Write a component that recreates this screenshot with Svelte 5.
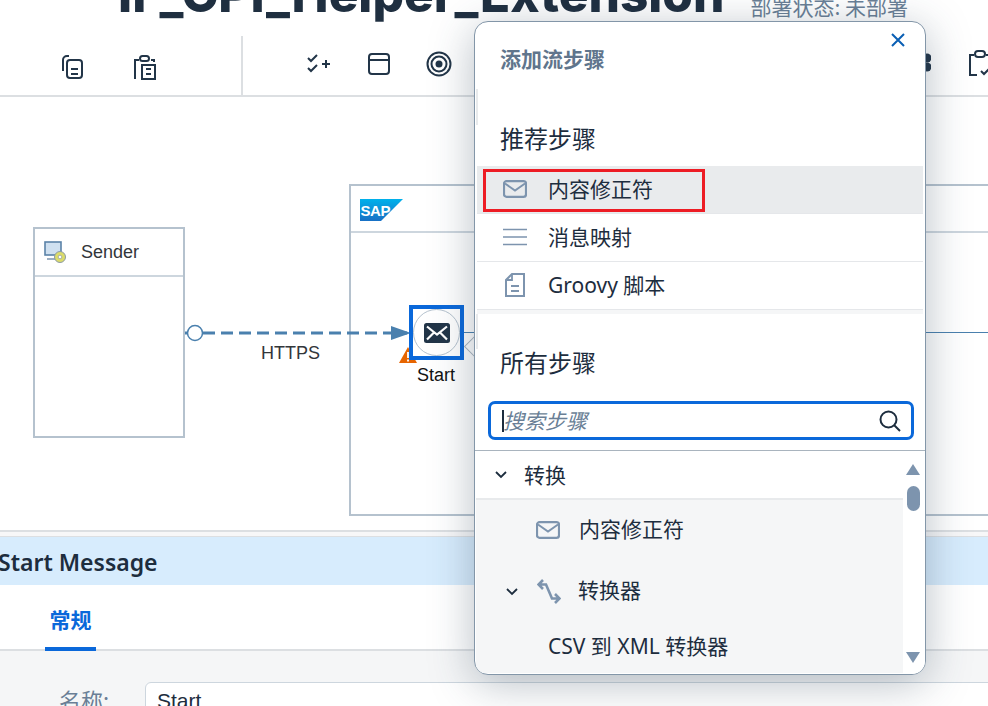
<script>
  const recommended = [
    { icon: 'mail', label: '内容修正符', active: true },
    { icon: 'lines', label: '消息映射' },
    { icon: 'doc', label: 'Groovy 脚本' }
  ];
</script>

{#snippet stepIcon(name)}
  {#if name === 'mail'}
    <svg class="step-icon" viewBox="0 0 24 18" width="24" height="18"><rect x="1" y="1.2" width="22" height="15.6" rx="2.5" fill="none" stroke="#7d94ae" stroke-width="2.2"/><path d="M2 3.5l10 7 10-7" fill="none" stroke="#7d94ae" stroke-width="2"/></svg>
  {:else if name === 'lines'}
    <svg class="step-icon" viewBox="0 0 24 18" width="24" height="18"><path d="M0 1.5h24M0 9h24M0 16.5h24" stroke="#7d94ae" stroke-width="1.6"/></svg>
  {:else}
    <svg class="step-icon" viewBox="0 0 24 24" width="24" height="24"><path d="M9 1h12v22H3V7z" fill="none" stroke="#7d94ae" stroke-width="2"/><path d="M9 1v6H3M8 13h8M8 18h8" fill="none" stroke="#7d94ae" stroke-width="1.8"/></svg>
  {/if}
{/snippet}

<div class="page">
  <header class="top">
    <div class="title-row">
      <h1>IF_CPI_Helper_Extension</h1>
      <span class="status">部署状态: 未部署</span>
    </div>
    <div class="toolbar">
      <div class="tool-group first">
        <svg viewBox="0 0 24 26" width="24" height="26" fill="none" stroke="#223548" stroke-width="2"><path d="M8 2H6a4 4 0 0 0-4 4v11"/><rect x="6" y="6" width="15" height="18" rx="3"/><path d="M10 15h7M10 20h7"/></svg>
        <svg viewBox="0 0 24 26" width="24" height="26" fill="none" stroke="#223548" stroke-width="2"><path d="M6 6H2v19M18 6h3v2"/><rect x="7" y="2" width="9" height="5" rx="2.5"/><rect x="9" y="11" width="13" height="14"/><path d="M13 15h5M13 20h5"/></svg>
      </div>
      <div class="tool-group second">
        <svg viewBox="0 0 26 20" width="26" height="20" fill="none" stroke="#223548" stroke-width="2"><path d="M2 4l3 3 6-6M2 14l3 3 6-6M16 10h8M20 6v8"/></svg>
        <svg viewBox="0 0 22 22" width="22" height="22" fill="none" stroke="#223548" stroke-width="2"><rect x="1" y="1" width="20" height="20" rx="3"/><path d="M1 7h20"/></svg>
        <svg viewBox="0 0 26 26" width="26" height="26" fill="none" stroke="#223548" stroke-width="2"><circle cx="13" cy="13" r="11.5"/><circle cx="13" cy="13" r="7.5"/><circle cx="13" cy="13" r="3.5" fill="#223548" stroke="none"/></svg>
      </div>
      <div class="tool-group third">
        <svg class="clip" viewBox="0 0 24 20" width="24" height="20"><circle cx="20" cy="5" r="4.5" fill="#223548"/><circle cx="20" cy="14" r="4.5" fill="#223548"/></svg>
        <svg class="clip" viewBox="0 0 24 26" width="24" height="26" fill="none" stroke="#223548" stroke-width="2"><path d="M6 5H2v20h7M18 5h4v10"/><rect x="7" y="1" width="10" height="6" rx="3"/><path d="M13 21l3 3 6-6"/></svg>
      </div>
    </div>
  </header>

  <main class="canvas">
    <div class="participant">
      <div class="participant-head">
        <svg viewBox="0 0 22 22" width="22" height="22"><rect x="1" y="1" width="16" height="13" fill="#cfe0f0" stroke="#5b83a8" stroke-width="1.6"/><path d="M3 18h12" stroke="#7d94ae" stroke-width="1.5"/><circle cx="16" cy="16" r="5.5" fill="#dcdc6a" stroke="#8c9aa8"/><circle cx="16" cy="16" r="1.8" fill="#fff" stroke="#8c9aa8" stroke-width=".7"/></svg>
        <span>Sender</span>
      </div>
    </div>

    <div class="pool">
      <div class="pool-head">
        <svg viewBox="0 0 43 22" width="43" height="22"><defs><linearGradient id="sapg" x1="0" y1="0" x2="0" y2="1"><stop offset="0" stop-color="#00b1eb"/><stop offset="1" stop-color="#1870c5"/></linearGradient></defs><path d="M0 0h43L21 22H0z" fill="url(#sapg)"/><text x="0.5" y="16.5" class="sap">SAP</text></svg>
      </div>
    </div>

    <div class="flow-line"></div>
    <svg class="connector" width="235" height="20" viewBox="0 0 235 20">
      <path d="M0 10h222" stroke="#4a80ae" stroke-width="3" stroke-dasharray="12 6" fill="none"/>
      <path d="M206 3l20 7-20 7z" fill="#4a80ae"/>
      <circle cx="10" cy="10" r="7.5" fill="#fff" stroke="#4a80ae" stroke-width="1.5"/>
    </svg>
    <span class="https">HTTPS</span>

    <div class="start-node">
      <div class="start-circle">
        <svg viewBox="0 0 26 20" width="26" height="20"><rect width="26" height="20" rx="2.5" fill="#223548"/><path d="M3 3.5l10 8 10-8M3 16.5l7-7M23 16.5l-7-7" fill="none" stroke="#fff" stroke-width="2.2"/></svg>
      </div>
    </div>
    <svg class="warn" viewBox="0 0 18 16" width="18" height="16"><path d="M9 0l9 16H0z" fill="#e76500"/><path d="M9 5v6M9 12.5v2" stroke="#fff" stroke-width="1.8"/></svg>
    <span class="start-label">Start</span>
  </main>

  <section class="details">
    <div class="details-title">Start Message</div>
    <div class="tabs"><span class="tab">常规</span></div>
    <div class="form">
      <label for="name">名称:</label>
      <input id="name" value="Start" />
    </div>
  </section>

  <div class="pop-arrow"></div>
  <aside class="popover">
    <button class="close" aria-label="关闭"><svg viewBox="0 0 14 14" width="14" height="14"><path d="M1 1l12 12M13 1L1 13" stroke="#0a5fb4" stroke-width="2"/></svg></button>
    <div class="pop-title">添加流步骤</div>
    <div class="rule first-rule"></div>
    <div class="section-title">推荐步骤</div>
    <ul class="rec-list">
      {#each recommended as item}
        <li class:active={item.active}>
          {@render stepIcon(item.icon)}
          <span>{item.label}</span>
        </li>
      {/each}
    </ul>
    <div class="highlight"></div>
    <div class="rule last-rule"></div>
    <div class="section-title">所有步骤</div>
    <div class="search">
      <span class="caret"></span>
      <span class="placeholder">搜索步骤</span>
      <svg viewBox="0 0 22 22" width="22" height="22" fill="none" stroke="#1d2d3e" stroke-width="2"><circle cx="9.5" cy="9.5" r="8"/><path d="M15 15l6 6"/></svg>
    </div>
    <div class="tree">
      <div class="tree-scroll">
        <div class="tree-root">
          <svg class="chev" viewBox="0 0 12 8" width="12" height="8"><path d="M1 1l5 5 5-5" fill="none" stroke="#1d2d3e" stroke-width="1.8"/></svg>
          <span>转换</span>
        </div>
        <div class="tree-body">
          <div class="tree-item leaf">
            {@render stepIcon('mail')}
            <span>内容修正符</span>
          </div>
          <div class="tree-item group">
            <svg class="chev" viewBox="0 0 12 8" width="12" height="8"><path d="M1 1l5 5 5-5" fill="none" stroke="#1d2d3e" stroke-width="1.8"/></svg>
            <svg class="step-icon" viewBox="0 0 24 25" width="24" height="25" fill="none" stroke="#7d94ae" stroke-width="2.6"><path d="M6 1L1.5 5.5 6 10M1.5 5.5H9l6 14h7.5M18 15l4.5 4.5L18 24"/></svg>
            <span class="group-label">转换器</span>
          </div>
          <div class="tree-item sub">CSV 到 XML 转换器</div>
        </div>
      </div>
      <div class="scrollbar">
        <span class="arrow up"></span>
        <span class="thumb"></span>
        <span class="arrow down"></span>
      </div>
    </div>
  </aside>
</div>

<style>
  :global(body) {
    margin: 0;
    background: #fff;
    overflow: hidden;
    font-family: "Noto Sans", "Noto Sans CJK SC", sans-serif;
    color: #1d2d3e;
  }

  .page {
    position: relative;
    width: 988px;
    height: 706px;
    overflow: hidden;
    display: flex;
    flex-direction: column;
  }

  .top {
    height: 97px;
    flex: none;
    display: flex;
    flex-direction: column;
    box-sizing: border-box;
    border-bottom: 2px solid #dcdfe2;
    overflow: hidden;
  }

  .title-row {
    height: 36px;
    flex: none;
    display: flex;
    align-items: flex-end;
    padding-left: 118px;
    gap: 26px;
    overflow: hidden;
  }

  h1 {
    margin: 0 0 17px;
    font: 800 49.5px/50px Inter, "Liberation Sans", sans-serif;
    color: #1f2f40;
    white-space: nowrap;
  }

  .status {
    font: 21px/24px "Noto Sans CJK SC", sans-serif;
    color: #6a7f96;
    white-space: nowrap;
    margin-bottom: 18px;
  }

  .toolbar {
    flex: 1;
    display: flex;
    align-items: stretch;
  }

  .tool-group {
    display: flex;
    align-items: center;
  }

  .tool-group.first {
    width: 243px;
    padding-left: 61px;
    padding-top: 2px;
    gap: 48px;
    box-sizing: border-box;
    border-right: 2px solid #dcdfe2;
  }

  .tool-group.second {
    padding-left: 63px;
    padding-bottom: 4px;
    gap: 36px;
  }

  .tool-group.third {
    margin-left: auto;
    width: 81px;
    gap: 37px;
    overflow: hidden;
    padding-bottom: 6px;
  }

  .clip { flex: none; }

  .canvas {
    position: relative;
    flex: none;
    height: 433px;
    background: #fff;
  }

  .participant {
    position: absolute;
    left: 33px;
    top: 130px;
    width: 148px;
    height: 207px;
    border: 2px solid #b5c2ce;
    background: #fff;
  }

  .participant-head {
    height: 46px;
    border-bottom: 2px solid #cdd6de;
    display: flex;
    align-items: center;
    padding-left: 9px;
    gap: 15px;
    font: 18px "Liberation Sans", sans-serif;
    color: #32363a;
  }

  .pool {
    position: absolute;
    left: 349px;
    top: 87px;
    width: 660px;
    height: 332px;
    border: 2px solid #b5c2ce;
    box-sizing: border-box;
    background: #fff;
  }

  .pool-head {
    height: 47px;
    border-bottom: 2px solid #cdd6de;
    padding: 13px 0 0 9px;
    box-sizing: border-box;
  }

  .sap {
    font: 700 15px "Liberation Sans", sans-serif;
    letter-spacing: -.4px;
    fill: #fff;
  }

  .flow-line {
    position: absolute;
    left: 464px;
    top: 235px;
    width: 524px;
    height: 1px;
    background: #4a80ae;
  }

  .connector {
    position: absolute;
    left: 185px;
    top: 226px;
  }

  .https {
    position: absolute;
    left: 261px;
    top: 246px;
    font: 18px "Liberation Sans", sans-serif;
    color: #32363a;
  }

  .start-node {
    position: absolute;
    left: 409px;
    top: 208px;
    width: 55px;
    height: 55px;
    box-sizing: border-box;
    border: 4px solid #0a68da;
    background: #fff;
    display: flex;
    align-items: center;
    justify-content: center;
    z-index: 1;
  }

  .start-circle {
    width: 47px;
    height: 47px;
    flex: none;
    box-sizing: border-box;
    border: 1px solid #b5c2ce;
    border-radius: 50%;
    display: flex;
    align-items: center;
    justify-content: center;
  }

  .warn {
    position: absolute;
    left: 399px;
    top: 250px;
  }

  .start-label {
    position: absolute;
    left: 417px;
    top: 268px;
    font: 18px "Liberation Sans", sans-serif;
    color: #111;
  }

  .details {
    flex: 1;
    border-top: 2px solid #dcdfe2;
    padding-top: 4px;
    background: #f7f7f8;
    min-height: 0;
  }

  .details-title {
    height: 49px;
    padding-top: 2px;
    background: #d7ecfd;
    border-top: 1px solid #dcdfe2;
    box-sizing: border-box;
    display: flex;
    align-items: center;
    font: 600 23px "Noto Sans", sans-serif;
    color: #1d2d3e;
    margin-left: -2px;
  }

  .tabs {
    height: 66px;
    box-sizing: border-box;
    background: #fff;
    border-bottom: 2px solid #dcdfe2;
    padding-left: 45px;
    display: flex;
  }

  .tab {
    width: 51px;
    text-align: center;
    font: 700 21px/68px "Noto Sans CJK SC", sans-serif;
    color: #0a68da;
    box-sizing: border-box;
    border-bottom: 4px solid #0a68da;
    height: 66px;
  }

  .form {
    background: #f5f6f7;
    display: flex;
    align-items: flex-start;
    padding-top: 31px;
    box-sizing: border-box;
    height: 100px;
  }

  .form label {
    width: 109px;
    text-align: right;
    font: 22px/34px "Noto Sans CJK SC", sans-serif;
    color: #6a7f96;
    margin-right: 36px;
    flex: none;
  }

  .form input {
    flex: 1;
    min-width: 0;
    margin-right: -12px;
    height: 38px;
    box-sizing: border-box;
    border: 1px solid #cdd6de;
    border-radius: 6px 0 0 0;
    padding: 0 11px;
    font: 21px "Liberation Sans", sans-serif;
    color: #1d2d3e;
    background: #fff;
    outline: none;
  }

  .pop-arrow {
    position: absolute;
    left: 467px;
    top: 339px;
    width: 15px;
    height: 15px;
    box-sizing: border-box;
    background: #fff;
    border: 1px solid #a9b4be;
    transform: rotate(45deg);
    z-index: 4;
  }

  .popover {
    position: absolute;
    left: 474px;
    top: 21px;
    width: 452px;
    height: 654px;
    box-sizing: border-box;
    background: #fff;
    border: 1px solid #8396a8;
    border-radius: 14px;
    box-shadow: 0 8px 44px rgba(50, 70, 90, .35);
    z-index: 5;
    overflow: hidden;
  }

  .close {
    position: absolute;
    right: 20px;
    top: 11px;
    padding: 0;
    border: 0;
    background: none;
    line-height: 0;
  }

  .pop-title {
    padding: 22px 0 0 25px;
    font: 700 21px/28px "Noto Sans CJK SC", sans-serif;
    color: #60758c;
    height: 51px;
    box-sizing: border-box;
  }

  .rule {
    height: 36px;
    margin-left: 1px;
    border-left: 2px solid #e8eaec;
  }

  .first-rule { margin-top: 16px; }
  .last-rule { height: 35px; }

  .section-title {
    padding-left: 25px;
    font: 400 24px/26px "Noto Sans CJK SC", sans-serif;
    color: #1d2d3e;
  }

  .rec-list {
    list-style: none;
    margin: 15px 2px 0;
    padding: 0;
    border-bottom: 4px solid #f5f6f7;
  }

  .rec-list li {
    height: 48px;
    box-sizing: border-box;
    display: flex;
    align-items: center;
    padding: 0 0 2px 26px;
    gap: 21px;
    border-bottom: 1px solid #e5e7ea;
    font: 21px "Noto Sans", "Noto Sans CJK SC", sans-serif;
  }

  .rec-list li span { padding-bottom: 2px; }
  .rec-list li.active { background: #e9ebed; }

  .step-icon { flex: none; }

  .highlight {
    position: absolute;
    left: 8px;
    top: 147px;
    width: 222px;
    height: 43px;
    box-sizing: border-box;
    border: 3px solid #ed1c24;
  }

  .search {
    margin: 26px 11px 0 13px;
    height: 39px;
    box-sizing: border-box;
    border: 3px solid #0a68da;
    border-radius: 7px;
    display: flex;
    align-items: center;
    padding: 0 10px 0 11px;
  }

  .caret {
    width: 2px;
    height: 22px;
    background: #1d2d3e;
    flex: none;
  }

  .placeholder {
    flex: 1;
    margin-left: -1px;
    padding-bottom: 2px;
    font: italic 21px "Noto Sans CJK SC", sans-serif;
    color: #6a7f96;
  }

  .tree {
    margin-top: 10px;
    border-top: 1px solid #a9b4be;
    display: flex;
    height: 224px;
  }

  .tree-scroll {
    flex: 1;
    margin-left: 1px;
    min-width: 0;
  }

  .tree-root {
    height: 49px;
    display: flex;
    align-items: center;
    padding-left: 19px;
    gap: 17px;
    box-sizing: border-box;
    border-bottom: 2px solid #e8eaec;
    font: 21px "Noto Sans CJK SC", sans-serif;
  }

  .tree-root span { padding-bottom: 2px; }

  .tree-body {
    background: #f5f6f7;
    height: 173px;
  }

  .tree-item {
    display: flex;
    align-items: center;
    box-sizing: border-box;
    font: 21px "Noto Sans", "Noto Sans CJK SC", sans-serif;
  }

  .leaf {
    height: 62px;
    padding: 0 0 2px 60px;
    gap: 19px;
  }

  .leaf span { padding-bottom: 4px; }

  .group {
    height: 60px;
    padding-left: 30px;
    gap: 19px;
  }

  .group .step-icon { margin-bottom: 2px; }
  .group-label { margin-left: -2px; padding-bottom: 6px; }

  .sub {
    height: 50px;
    padding: 0 0 4px 72px;
  }

  .scrollbar {
    width: 22px;
    flex: none;
    position: relative;
    background: #fff;
  }

  .arrow {
    position: absolute;
    left: 3px;
    width: 0;
    height: 0;
    border-left: 7px solid transparent;
    border-right: 7px solid transparent;
  }

  .arrow.up {
    top: 13px;
    border-bottom: 11px solid #7d94ae;
  }

  .arrow.down {
    bottom: 12px;
    border-top: 11px solid #7d94ae;
  }

  .thumb {
    position: absolute;
    left: 4px;
    top: 35px;
    width: 13px;
    height: 25px;
    border-radius: 7px;
    background: #7d94ae;
  }
</style>
